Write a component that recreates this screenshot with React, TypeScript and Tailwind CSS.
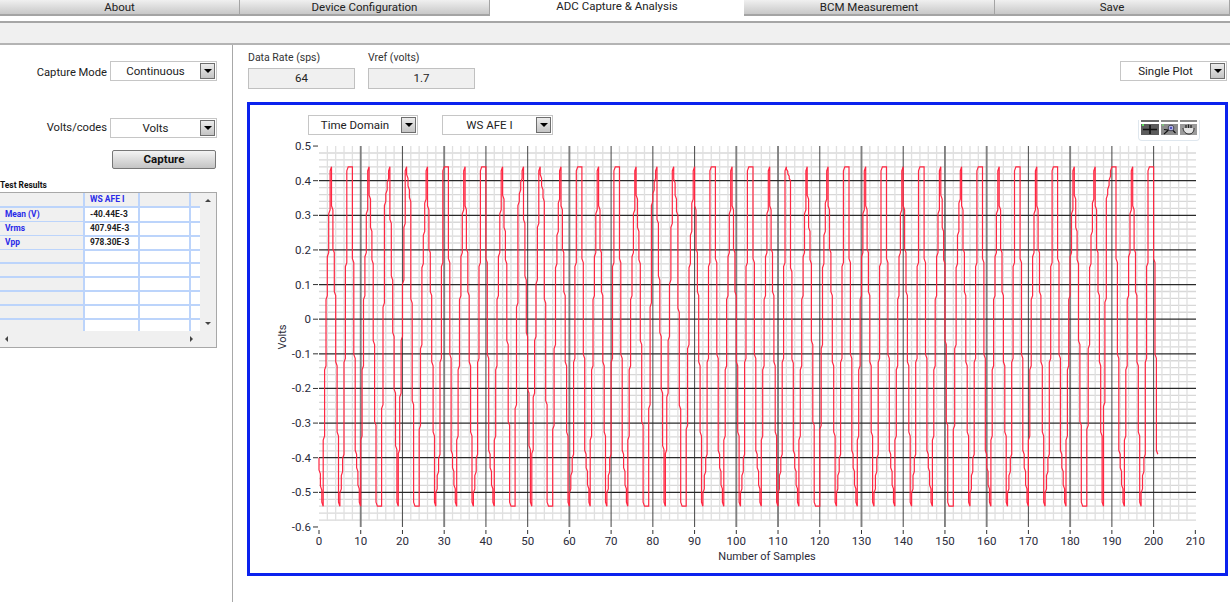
const FONT = "font-['Roboto','Noto_Sans',sans-serif]";

const TABS = [
  { label: "About", w: "w-[240px]" },
  { label: "Device Configuration", w: "w-[250px]" },
  { label: "ADC Capture & Analysis", w: "w-[254px]", active: true },
  { label: "BCM Measurement", w: "w-[251px]" },
  { label: "Save", w: "flex-1" },
];

// chart scale, in page pixels
const xPos = (n: number) => 319 + n * 4.173;
const yPos = (v: number) => 319.2 - v * 346.3;

// where each crest of the clipped tone falls, read off the plot
const PEAKS = [
  -1.5, 3, 7.5, 12, 17, 21, 26, 30.5, 35, 39.5, 44, 49, 53, 58, 62.5, 67, 71.5, 76, 81, 85, 90, 94.5, 99, 103.5, 108, 112.5, 117,
  122, 126.5, 131, 135.5, 140, 144.5, 149, 154, 158.5, 163, 167.5, 172, 176.5, 181, 186, 190.5, 195, 199.5, 204,
];
const SHOULDERS: Record<number, number> = { 0: -0.4, 16: 0.34, 22: 0.34, 48: 0.34, 54: 0.34, 80: 0.34, 86: 0.3, 113: 0.4, 189: 0.36 };

function sampleAt(n: number) {
  if (SHOULDERS[n] !== undefined) return SHOULDERS[n];
  const i = PEAKS.findIndex((p, k) => p <= n && n < PEAKS[k + 1]);
  const a = PEAKS[i];
  const b = PEAKS[i + 1];
  // half a cycle from crest to trough and half back, troughs sit midway
  const v = -0.05 + 0.68 * Math.cos((2 * Math.PI * (n - a)) / (b - a));
  return Math.max(-0.54, Math.min(0.44, v));
}

const samples = Array.from({ length: 202 }, (_, n) => sampleAt(n));

function stairTrace(values: number[]) {
  const pts: string[] = [`${xPos(0).toFixed(1)},${yPos(values[0]).toFixed(1)}`];
  for (let n = 0; n < values.length - 1; n++) {
    const x0 = xPos(n);
    const y0 = yPos(values[n]);
    const y1 = yPos(values[n + 1]);
    const steps = 3;
    const dx = (xPos(n + 1) - x0) / steps;
    for (let k = 1; k <= steps; k++) {
      const x = x0 + k * dx;
      const y = y0 + ((y1 - y0) * k) / steps;
      const jog = Math.sign(y1 - y0) * Math.min(4, Math.abs(y1 - y0) / steps / 2);
      pts.push(`${(x - dx).toFixed(1)},${(y - jog).toFixed(1)}`, `${x.toFixed(1)},${y.toFixed(1)}`);
    }
  }
  return pts.join(" ");
}

const trace = stairTrace(samples);

const THICK = [10, 30, 60, 100, 110, 130, 150, 160, 180];
const xMajor = Array.from({ length: 22 }, (_, i) => i * 10);
const xMinor = Array.from({ length: 106 }, (_, i) => i * 2).filter((n) => n % 10 !== 0);
const yMajor = Array.from({ length: 12 }, (_, i) => 5 - i);
const yMinor = Array.from({ length: 55 }, (_, i) => 0.5 - i * 0.02).filter((_, i) => i % 5 !== 0);

function ArrowButton({ className = "" }: { className?: string }) {
  return (
    <span className={`flex h-[16px] w-[15px] items-center justify-center border border-[#6e6e6e] bg-gradient-to-b from-[#ececec] to-[#c4c4c4] ${className}`}>
      <span className="h-0 w-0 border-x-[4px] border-t-[4px] border-x-transparent border-t-black" />
    </span>
  );
}

function Dropdown({ value, w = "w-[107px]" }: { value: string; w?: string }) {
  return (
    <div className={`flex h-[20px] items-center border border-[#c6c6c6] bg-white pr-[1px] ${w}`}>
      <span className="flex-1 pt-[1px] text-center text-[11.5px] leading-none text-[#222]">{value}</span>
      <ArrowButton />
    </div>
  );
}

function Readout({ label, value }: { label: string; value: string }) {
  return (
    <div className="flex w-[107px] flex-col">
      <span className="h-[17px] text-[10.5px] leading-[13px] text-[#333]">{label}</span>
      <div className="flex h-[21px] items-center justify-center border border-[#c0c0c0] bg-[#f0f0f0] text-[11.5px] text-[#222]">
        {value}
      </div>
    </div>
  );
}

const ROWS = [
  ["Mean (V)", "-40.44E-3"],
  ["Vrms", "407.94E-3"],
  ["Vpp", "978.30E-3"],
  ["", ""],
  ["", ""],
  ["", ""],
  ["", ""],
  ["", ""],
  ["", ""],
];

function ResultsTable() {
  return (
    <div className="flex h-[156px] w-[217px] flex-col border-y border-r border-[#a8a8a8] bg-white">
      <div className="flex h-[138px]">
        <div className="flex-1 overflow-hidden">
          <div className="grid grid-cols-[85px_55px_51px_9px] grid-rows-[15px] bg-[#f0f0f0]">
            <div className="border-b-2 border-r-2 border-[#bcd4fb]" />
            <div className="flex items-center border-b-2 border-r-2 border-[#bcd4fb] pl-[5px] text-[8.5px] font-bold text-[#2a2ae8]">WS AFE I</div>
            <div className="border-b-2 border-r-2 border-[#bcd4fb]" />
            <div className="border-b-2 border-[#bcd4fb]" />
          </div>
          {ROWS.map(([name, value], i) => (
            <div key={i} className="grid h-[14px] grid-cols-[85px_55px_51px_9px]">
              <div className="flex items-center border-b-2 border-r-2 border-[#bcd4fb] bg-[#f0f0f0] pl-[5px] text-[8.4px] font-bold text-[#2a2ae8]">{name}</div>
              <div className="flex items-center border-b-2 border-r-2 border-[#bcd4fb] pl-[5px] text-[8.4px] font-bold text-[#222]">{value}</div>
              <div className="border-b-2 border-r-2 border-[#bcd4fb]" />
              <div className="border-b-2 border-[#bcd4fb]" />
            </div>
          ))}
        </div>
        <div className="flex w-[16px] flex-col items-center justify-between bg-[#f0f0f0] py-[6px]">
          <span className="h-0 w-0 border-x-[3px] border-b-[3px] border-x-transparent border-b-[#444]" />
          <span className="h-0 w-0 border-x-[3px] border-t-[3px] border-x-transparent border-t-[#444]" />
        </div>
      </div>
      <div className="flex flex-1 items-center justify-between bg-[#f0f0f0] pl-[5px] pr-[23px]">
        <span className="h-0 w-0 border-y-[3px] border-r-[3px] border-y-transparent border-r-[#444]" />
        <span className="h-0 w-0 border-y-[3px] border-l-[3px] border-y-transparent border-l-[#444]" />
      </div>
    </div>
  );
}

function GraphTools() {
  return (
    <div className="absolute left-[888px] top-[15px] flex h-[21px] w-[62px] justify-center gap-[2px] rounded-b-[4px] border border-t-0 border-[#dfe7ee]">
      <svg width="18" height="15" viewBox="0 0 18 15">
        <rect width="18" height="2" fill="#6a6a6a" />
        <rect y="4" width="18" height="11" fill="#5c5c5c" />
        <rect x="1" y="4" width="2" height="2" fill="#5fe05f" />
        <path d="M2 9.500H16M9 5V14" stroke="#111" strokeWidth="1.6" />
      </svg>
      <svg width="17" height="15" viewBox="0 0 17 15">
        <rect width="17" height="2" fill="#8a8a8a" />
        <rect y="4" width="17" height="11" fill="#8c8c8c" />
        <rect x="1" y="4" width="2" height="2" fill="#7fc07f" />
        <circle cx="10" cy="8" r="2.800" fill="#dfe2ff" stroke="#223" strokeWidth="0.8" />
        <path d="M8.500 8h3M10 6.500v3" stroke="#2222aa" strokeWidth="1" />
        <path d="M7.500 10L3 14M12 10.500l2.500 2.500M3 9.500l4 .5" stroke="#111" strokeWidth="1.100" fill="none" />
      </svg>
      <svg width="17" height="15" viewBox="0 0 17 15">
        <rect width="17" height="2" fill="#8a8a8a" />
        <rect y="4" width="17" height="11" fill="#9a9a9a" />
        <path d="M3 8c.5 4 3 6 6 6s5-2 5-6" stroke="#222" strokeWidth="1" fill="#e4e4e4" />
        <path d="M6 8V5M8.500 8V4.500M11 8V5" stroke="#222" strokeWidth="1.200" fill="none" />
      </svg>
    </div>
  );
}

function Chart() {
  return (
    <svg width="975" height="437" viewBox="250 135 975 437" className="block">
      {yMinor.map((v) => (
        <line key={v} x1="319" x2="1196" y1={yPos(v)} y2={yPos(v)} stroke="#d8d8d8" strokeWidth="1.3" />
      ))}
      {xMinor.map((n) => (
        <line key={n} x1={xPos(n)} x2={xPos(n)} y1="146" y2="521" stroke="#e0e0e0" strokeWidth="1.3" />
      ))}
      {xMajor.slice(1, 21).map((n) => (
        <line
          key={n}
          x1={xPos(n)}
          x2={xPos(n)}
          y1="146"
          y2="527"
          stroke={THICK.includes(n) ? "#808080" : "#555"}
          strokeWidth={THICK.includes(n) ? 1.9 : 1.1}
        />
      ))}
      {yMajor.slice(1, 11).map((k) => (
        <line key={k} x1="319" x2="1196" y1={yPos(k / 10)} y2={yPos(k / 10)} stroke="#2a2a2a" strokeWidth="1.2" />
      ))}
      <polyline points={trace} fill="none" stroke="#ff2742" strokeWidth="1.2" />

      {yMajor.map((k) => (
        <g key={k}>
          <line x1="313" x2="318" y1={yPos(k / 10)} y2={yPos(k / 10)} stroke="#333" />
          <text x="311" y={yPos(k / 10) + 4} textAnchor="end" fontSize="11.5" fill="#2b2b3a">
            {k === 0 ? "0" : (k / 10).toFixed(1)}
          </text>
        </g>
      ))}
      {xMajor.map((n) => (
        <g key={n}>
          <line x1={xPos(n)} x2={xPos(n)} y1="530" y2="534" stroke="#333" />
          <text x={xPos(n)} y="545" textAnchor="middle" fontSize="11.5" fill="#2b2b3a">
            {n}
          </text>
        </g>
      ))}
      <text x="767" y="560" textAnchor="middle" fontSize="11" fill="#2b2b3a">
        Number of Samples
      </text>
      <text transform="translate(286 337) rotate(-90)" textAnchor="middle" fontSize="11" fill="#2b2b3a">
        Volts
      </text>
    </svg>
  );
}

export default function App() {
  return (
    <div className={`flex h-[602px] w-[1230px] flex-col overflow-hidden bg-white ${FONT}`}>
      <div className="flex h-[21px] items-start">
        {TABS.map((t) =>
          t.active ? (
            <div key={t.label} className={`flex h-[16px] items-start justify-center bg-white text-[11.5px] leading-[13px] text-[#222] ${t.w}`}>
              {t.label}
            </div>
          ) : (
            <div key={t.label} className={`flex h-[16px] items-center justify-center border-b-2 border-r border-[#a4a4a4] bg-gradient-to-b from-[#f0f0f0] to-[#c8c8c8] pt-[2px] text-[11.5px] leading-none text-[#222] ${t.w}`}>
              {t.label}
            </div>
          ),
        )}
      </div>
      <div className="h-[24px] border-y-2 border-y-[#a6a6a6] border-b-[#b4b4b4] bg-[#f0f0f0]" />

      <div className="flex flex-1">
        <div className="flex w-[233px] flex-col border-r border-[#a8a8a8] pt-[16px]">
          <div className="flex h-[20px] w-[217px] items-center justify-end gap-[3px]">
            <span className="pt-[4px] text-[11.2px] leading-[14px] text-[#222]">Capture Mode</span>
            <Dropdown value="Continuous" />
          </div>
          <div className="mt-[37px] flex h-[20px] w-[217px] items-center justify-end gap-[3px]">
            <span className="text-[11.2px] leading-[14px] text-[#222]">Volts/codes</span>
            <Dropdown value="Volts" />
          </div>
          <button className="ml-[112px] mt-[12px] h-[19px] w-[104px] rounded-[2px] border border-[#777] bg-gradient-to-b from-[#f4f4f4] to-[#c4c4c4] text-[11.5px] font-bold leading-none text-[#111]">
            Capture
          </button>
          <div className="mt-[10px] h-[13px] text-[8.4px] font-bold leading-[12px] text-[#111]">Test Results</div>
          <ResultsTable />
        </div>

        <div className="flex flex-1 flex-col pl-[14px] pr-[2px] pt-[6px]">
          <div className="flex h-[51px] items-start">
            <div className="ml-[1px] flex gap-[13px]">
              <Readout label="Data Rate (sps)" value="64" />
              <Readout label="Vref (volts)" value="1.7" />
            </div>
            <div className="ml-auto mr-[1px] mt-[10px]">
              <Dropdown value="Single Plot" />
            </div>
          </div>
          <div className="relative h-[474px] w-[981px] border-[3px] border-[#0b22ee]">
            <div className="flex gap-[24px] pl-[58px] pt-[10px]">
              <Dropdown value="Time Domain" w="w-[110px]" />
              <Dropdown value="WS AFE I" w="w-[111px]" />
            </div>
            <Chart />
            <GraphTools />
          </div>
        </div>
      </div>
    </div>
  );
}
